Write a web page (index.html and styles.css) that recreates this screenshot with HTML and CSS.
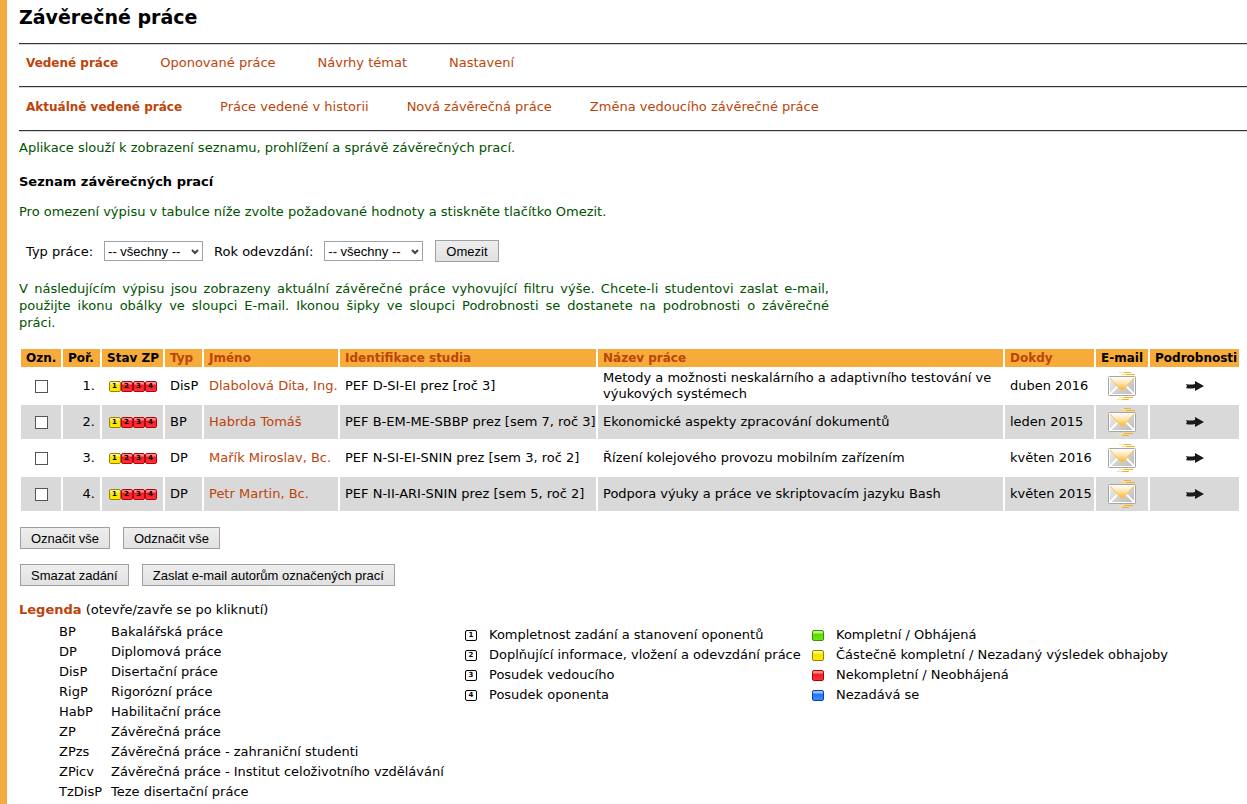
FILE: index.html
```html
<!DOCTYPE html>
<html lang="cs">
<head>
<meta charset="utf-8">
<title>Závěrečné práce</title>
<link rel="stylesheet" href="styles.css">
</head>
<body>
<svg class="sprites" aria-hidden="true">
  <defs>
    <linearGradient id="paper" x1="0" y1="0" x2="1" y2="1"><stop offset="0" stop-color="#f4f4f4"/><stop offset="1" stop-color="#b4b4b4"/></linearGradient>
    <linearGradient id="flap" x1="0" y1="0" x2="0" y2="1"><stop offset="0" stop-color="#fffaf0"/><stop offset=".5" stop-color="#ffe0a0"/><stop offset="1" stop-color="#fdb022"/></linearGradient>
    <symbol id="mail" viewBox="0 0 28 28">
      <path fill="#fbdf9c" d="M11 0h5v1h-5zM13 2h5v1h-5zM11 25h5v1h-5zM9 27h5v1H9z"/>
      <path fill="#f9b418" d="M16 0h7v1h-7zM18 2h9v1h-9zM16 25h9v1h-9zM14 27h7v1h-7z"/>
      <rect x=".5" y="4.5" width="27" height="19" rx="1" fill="url(#paper)" stroke="#a3a5a9"/>
      <rect x="1.5" y="5.5" width="25" height="17" fill="none" stroke="#fff"/>
      <path d="M2 22 10 14M26 22 18 14" stroke="#fff" stroke-width="2"/>
      <path d="M2 6h24L16 17q-2 2-4 0z" fill="url(#flap)"/>
      <path d="M2 6 12 17q2 2 4 0L26 6" fill="none" stroke="#fbc04c"/>
    </symbol>
    <symbol id="arrow" viewBox="0 0 20 12">
      <path fill="#1c191a" d="M1 4q5 1 9 0V1l9 5-9 5V8q-5 1-9 0l1-2z"/>
    </symbol>
  </defs>
</svg>
<main class="page">
  <h1 class="title">Závěrečné práce</h1>
  <nav class="tabs">
    <a class="active" href="#">Vedené práce</a><a href="#">Oponované práce</a><a href="#">Návrhy témat</a><a href="#">Nastavení</a>
  </nav>
  <nav class="tabs tabs-sub">
    <a class="active" href="#">Aktuálně vedené práce</a><a href="#">Práce vedené v historii</a><a href="#">Nová závěrečná práce</a><a href="#">Změna vedoucího závěrečné práce</a>
  </nav>
  <p class="help intro">Aplikace slouží k zobrazení seznamu, prohlížení a správě závěrečných prací.</p>
  <h2 class="subtitle">Seznam závěrečných prací</h2>
  <p class="help">Pro omezení výpisu v tabulce níže zvolte požadované hodnoty a stiskněte tlačítko Omezit.</p>
  <form class="filter">
    <label for="type">Typ práce:</label>
    <span class="select"><select id="type"><option>-- všechny --</option></select><svg viewBox="0 0 8 6" aria-hidden="true"><path d="M1 1l3 3 3-3"/></svg></span>
    <label for="year">Rok odevzdání:</label>
    <span class="select"><select id="year"><option>-- všechny --</option></select><svg viewBox="0 0 8 6" aria-hidden="true"><path d="M1 1l3 3 3-3"/></svg></span>
    <button class="button" type="button">Omezit</button>
  </form>
  <p class="help explain"><span class="full">V následujícím výpisu jsou zobrazeny aktuální závěrečné práce vyhovující filtru výše. Chcete-li studentovi zaslat e-mail, použijte ikonu obálky ve sloupci E-mail. Ikonou šipky ve sloupci Podrobnosti se dostanete na podrobnosti o závěrečné</span> práci.</p>
  <div class="table-wrap">
  <table class="theses">
    <colgroup><col class="c-mark"><col class="c-num"><col class="c-state"><col class="c-type"><col class="c-name"><col class="c-study"><col><col class="c-date"><col class="c-mail"><col class="c-detail"></colgroup>
    <thead>
      <tr><th>Ozn.</th><th>Poř.</th><th>Stav ZP</th><th><a href="#">Typ</a></th><th><a href="#">Jméno</a></th><th><a href="#">Identifikace studia</a></th><th><a href="#">Název práce</a></th><th><a href="#">Dokdy</a></th><th>E-mail</th><th>Podrobnosti</th></tr>
    </thead>
    <tbody>
      <tr><td class="mid"><input type="checkbox" aria-label="Označit 1"></td><td class="num">1.</td><td class="mid"><span class="states"><b class="box yellow">1</b><b class="box red">2</b><b class="box red">3</b><b class="box red">4</b></span></td><td>DisP</td><td><a href="#">Dlabolová Dita, Ing.</a></td><td>PEF D-SI-EI prez [roč 3]</td><td class="wrap">Metody a možnosti neskalárního a adaptivního testování ve výukových systémech</td><td>duben 2016</td><td class="mid"><a href="#" aria-label="E-mail"><svg class="mail"><use href="#mail"/></svg></a></td><td class="mid"><a href="#" aria-label="Podrobnosti"><svg class="arrow"><use href="#arrow"/></svg></a></td></tr>
      <tr><td class="mid"><input type="checkbox" aria-label="Označit 2"></td><td class="num">2.</td><td class="mid"><span class="states"><b class="box yellow">1</b><b class="box red">2</b><b class="box red">3</b><b class="box red">4</b></span></td><td>BP</td><td><a href="#">Habrda Tomáš</a></td><td>PEF B-EM-ME-SBBP prez [sem 7, roč 3]</td><td class="wrap">Ekonomické aspekty zpracování dokumentů</td><td>leden 2015</td><td class="mid"><a href="#" aria-label="E-mail"><svg class="mail"><use href="#mail"/></svg></a></td><td class="mid"><a href="#" aria-label="Podrobnosti"><svg class="arrow"><use href="#arrow"/></svg></a></td></tr>
      <tr><td class="mid"><input type="checkbox" aria-label="Označit 3"></td><td class="num">3.</td><td class="mid"><span class="states"><b class="box yellow">1</b><b class="box red">2</b><b class="box red">3</b><b class="box red">4</b></span></td><td>DP</td><td><a href="#">Mařík Miroslav, Bc.</a></td><td>PEF N-SI-EI-SNIN prez [sem 3, roč 2]</td><td class="wrap">Řízení kolejového provozu mobilním zařízením</td><td>květen 2016</td><td class="mid"><a href="#" aria-label="E-mail"><svg class="mail"><use href="#mail"/></svg></a></td><td class="mid"><a href="#" aria-label="Podrobnosti"><svg class="arrow"><use href="#arrow"/></svg></a></td></tr>
      <tr><td class="mid"><input type="checkbox" aria-label="Označit 4"></td><td class="num">4.</td><td class="mid"><span class="states"><b class="box yellow">1</b><b class="box red">2</b><b class="box red">3</b><b class="box red">4</b></span></td><td>DP</td><td><a href="#">Petr Martin, Bc.</a></td><td>PEF N-II-ARI-SNIN prez [sem 5, roč 2]</td><td class="wrap">Podpora výuky a práce ve skriptovacím jazyku Bash</td><td>květen 2015</td><td class="mid"><a href="#" aria-label="E-mail"><svg class="mail"><use href="#mail"/></svg></a></td><td class="mid"><a href="#" aria-label="Podrobnosti"><svg class="arrow"><use href="#arrow"/></svg></a></td></tr>
    </tbody>
  </table>
  </div>
  <div class="actions"><button class="button" type="button">Označit vše</button><button class="button" type="button">Odznačit vše</button></div>
  <div class="actions"><button class="button" type="button">Smazat zadání</button><button class="button" type="button">Zaslat e-mail autorům označených prací</button></div>
  <p class="legend-head"><a href="#">Legenda</a> (otevře/zavře se po kliknutí)</p>
  <div class="legend">
    <dl class="types">
      <dt>BP</dt><dd>Bakalářská práce</dd>
      <dt>DP</dt><dd>Diplomová práce</dd>
      <dt>DisP</dt><dd>Disertační práce</dd>
      <dt>RigP</dt><dd>Rigorózní práce</dd>
      <dt>HabP</dt><dd>Habilitační práce</dd>
      <dt>ZP</dt><dd>Závěrečná práce</dd>
      <dt>ZPzs</dt><dd>Závěrečná práce - zahraniční studenti</dd>
      <dt>ZPicv</dt><dd>Závěrečná práce - Institut celoživotního vzdělávání</dd>
      <dt>TzDisP</dt><dd>Teze disertační práce</dd>
    </dl>
    <ul class="keys keys-steps">
      <li><b class="box plain">1</b>Kompletnost zadání a stanovení oponentů</li>
      <li><b class="box plain">2</b>Doplňující informace, vložení a odevzdání práce</li>
      <li><b class="box plain">3</b>Posudek vedoucího</li>
      <li><b class="box plain">4</b>Posudek oponenta</li>
    </ul>
    <ul class="keys">
      <li><b class="box green"></b>Kompletní / Obhájená</li>
      <li><b class="box yellow"></b>Částečně kompletní / Nezadaný výsledek obhajoby</li>
      <li><b class="box red"></b>Nekompletní / Neobhájená</li>
      <li><b class="box blue"></b>Nezadává se</li>
    </ul>
  </div>
</main>
</body>
</html>
```
FILE: styles.css
```css
* { box-sizing: border-box; }
body {
  margin: 0;
  background: #fff;
  color: #000;
  font: 13px/17px Verdana, "DejaVu Sans", sans-serif;
}
.sprites { position: absolute; width: 0; height: 0; }
.page {
  min-height: 100vh;
  padding: 5px 0 0 12px;
  border-left: 7px solid #f4aa3c;
}
a { color: #bc440a; text-decoration: none; }
h1, h2, p, dl, dd, ul { margin: 0; padding: 0; }
.title { margin-bottom: 14px; font-size: 19px; line-height: 24px; }
.tabs {
  display: flex;
  align-items: baseline;
  gap: 42px;
  padding: 10px 7px 14px;
  border-top: 1px solid #333;
  box-shadow: inset 0 1px #d8d8d8;
  white-space: nowrap;
}
.tabs-sub {
  gap: 38px;
  padding-top: 11px;
  border-bottom: 1px solid #333;
  box-shadow: inset 0 1px #d8d8d8, 0 1px #d8d8d8;
}
.active { font-weight: bold; font-size: 12px; }
.help { color: #005200; }
.intro { margin-top: 8px; }
.subtitle { margin: 17px 0 13px; font-size: 13px; }
.filter { display: flex; align-items: center; padding-left: 7px; margin: 20px 0 18px; }
.select { position: relative; margin: 0 11px; }
.select + .button { margin-left: 1px; }
.select select {
  display: block;
  appearance: none;
  width: 99px;
  height: 20px;
  padding: 0 3px;
  border: 1px solid #a0a0a8;
  border-radius: 0;
  background: #fff;
  color: #000;
  font: 13px "Liberation Sans", Arial, sans-serif;
}
.select svg {
  position: absolute;
  right: 4px;
  top: 8px;
  width: 8px;
  height: 6px;
  fill: none;
  stroke: #444;
  stroke-width: 2;
  pointer-events: none;
}
.button {
  height: 22px;
  padding: 0 10px;
  border: 1px solid #a0a0a0;
  border-radius: 0;
  background: linear-gradient(#eee, #e1e1e1);
  color: #000;
  font: 13px "Liberation Sans", Arial, sans-serif;
}
.explain { max-width: 810px; text-align: justify; }
.full { display: block; text-align-last: justify; }
.table-wrap { padding: 16px 6px 0 0; }
.theses { width: 100%; table-layout: fixed; border-spacing: 2px; white-space: nowrap; }
.c-mark { width: 40px; }
.c-num { width: 37px; }
.c-state { width: 61px; }
.c-type { width: 37px; }
.c-name { width: 134px; }
.c-study { width: 256px; }
.c-date { width: 89px; }
.c-mail { width: 52px; }
.c-detail { width: 89px; }
.theses th { height: 18px; padding: 0 5px; background: #f7ab3b; text-align: left; font-size: 12px; line-height: 18px; }
.theses td { height: 34px; padding: 1px 5px; line-height: 16px; vertical-align: middle; }
.theses tbody tr:nth-child(even) td { background: #d9d9d9; }
.theses .wrap { white-space: normal; }
.theses .num { text-align: right; }
.theses .mid { text-align: center; }
.theses svg { display: block; margin: 0 auto; }
.theses input {
  display: block;
  appearance: none;
  width: 13px;
  height: 13px;
  margin: 0 auto;
  border: 1px solid #555;
  background: #fff;
}
.theses input:checked { background: #555; }
.mail { width: 28px; height: 28px; }
.arrow { width: 20px; height: 12px; }
.states { display: flex; justify-content: center; }
.box {
  display: inline-block;
  width: 12px;
  height: 11px;
  border: 1px solid;
  border-radius: 2px;
  color: #000;
  font: bold 7px/9px "DejaVu Sans", sans-serif;
  text-align: center;
}
.yellow { border-color: #948400; background: linear-gradient(#fff780 2px, #f4e000 3px, #ffec00); }
.red { border-color: #b00008; background: linear-gradient(#ff8a8a 2px, #f01c24 3px, #ff3038); }
.green { border-color: #3c9000; background: linear-gradient(#b4f880 2px, #58d800 3px, #6cec0c); }
.blue { border-color: #0840a8; background: linear-gradient(#90c4ff 2px, #2474f0 3px, #3c8cff); }
.plain { border-color: #000; background: #fff; }
.actions { display: flex; gap: 13px; margin: 14px 0 0 1px; }
.actions + .actions { margin-top: 15px; }
.legend-head { margin-top: 15px; }
.legend-head a { font-weight: bold; }
.legend { display: flex; padding-left: 40px; margin-top: 4px; line-height: 20px; white-space: nowrap; }
.types { display: grid; grid-template-columns: 52px auto; width: 406px; }
.keys { margin-top: 3px; list-style: none; }
.keys-steps { width: 347px; }
.keys li { display: flex; align-items: center; gap: 12px; }
```
